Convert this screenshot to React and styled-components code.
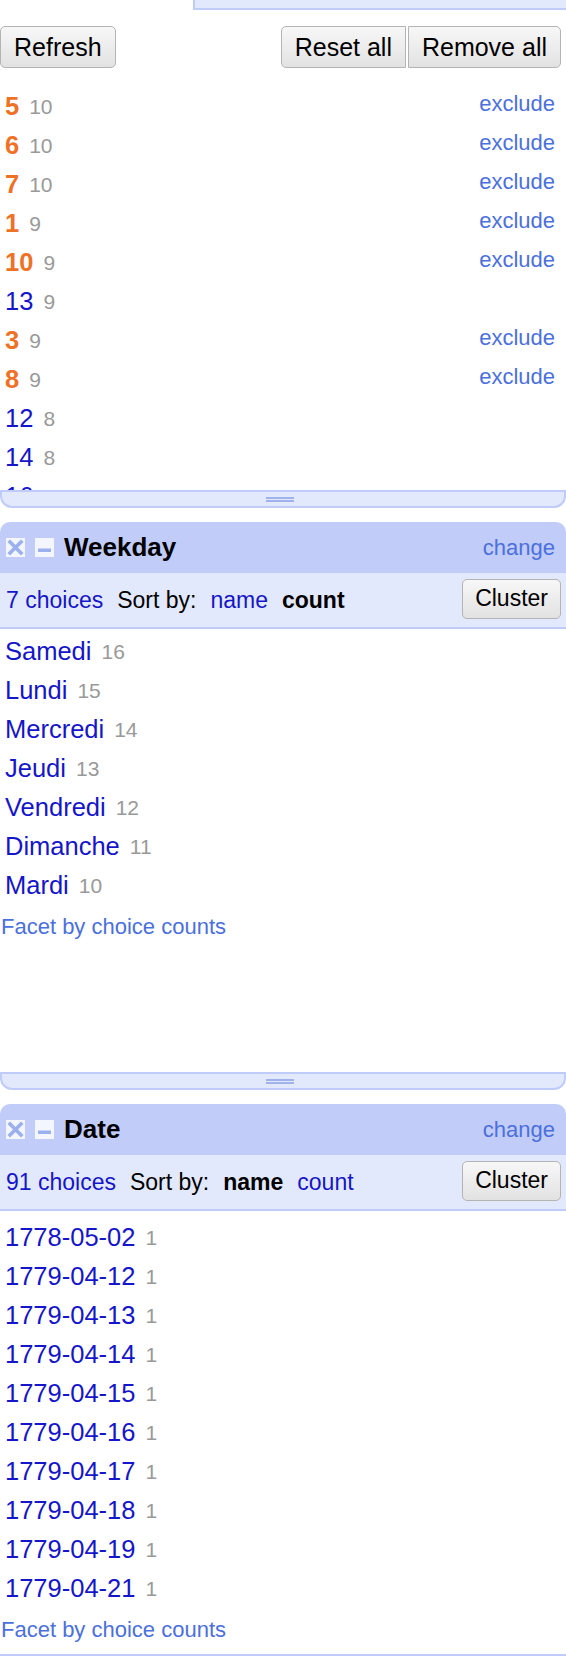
import React from 'react';
import styled, { createGlobalStyle } from 'styled-components';

const GlobalStyle = createGlobalStyle`
      body {
            margin: 0;
            background: #fff;
            font-family: "Liberation Sans", Arial, Helvetica, sans-serif;
      }
`;

const Page = styled.div`
      width: 566px;
      display: flex;
      flex-direction: column;
`;
const TopStub = styled.div`
      margin-left: 193px;
      height: 8px;
      background: #e3e9fc;
      border-left: 2px solid #c0ccf8;
      border-bottom: 2px solid #c0ccf8;
`;
const Toolbar = styled.div`
      display: flex;
      justify-content: space-between;
      margin-top: 16px;
      padding-right: 5px;
`;
const ButtonGroup = styled.div`
      display: flex;
      gap: 2px;
`;
const Button = styled.button`
      height: 42px;
      padding: 0 13px;
      font-family: inherit;
      font-size: 25px;
      color: #000;
      background: linear-gradient(#f7f7f7, #e2e2e2);
      border: 1.5px solid #b4b4b4;
      border-radius: ${(p) => p.$radius || '5px'};
      cursor: pointer;
`;
const ClusterButton = styled(Button)`
      height: 40px;
      margin-left: auto;
      padding: 0 12px;
      font-size: 23px;
      margin-top: -3px;
`;
const Body = styled.div`
      box-sizing: border-box;
      height: ${(p) => p.$height}px;
      padding-top: ${(p) => p.$top || 0}px;
      overflow: hidden;
`;
const Row = styled.div`
      display: flex;
      align-items: center;
      height: 39px;
      padding: 0 11px 0 5px;
`;
const ChoiceName = styled.a`
      font-size: 25.5px;
      text-decoration: none;
      color: ${(p) => (p.$selected ? '#ef7126' : '#1515c9')};
      font-weight: ${(p) => (p.$selected ? 'bold' : 'normal')};
`;
const Count = styled.span`
      margin-left: 10px;
      font-size: 21px;
      color: #999;
`;
const Exclude = styled.a`
      margin-left: auto;
      align-self: flex-start;
      line-height: 34px;
      font-size: 22px;
      color: #4b70dc;
`;
const ResizeBar = styled.div`
      box-sizing: border-box;
      height: 18px;
      display: flex;
      align-items: center;
      justify-content: center;
      background: #e3e9fc;
      border: 2px solid #bfcbf8;
      border-radius: 0 0 12px 12px;
`;
const Handle = styled.div`
      width: 28px;
      height: 1px;
      margin-right: 6px;
      border-top: 2px solid #9fb2ec;
      border-bottom: 2px solid #9fb2ec;
`;
const FacetBox = styled.div`
      margin-top: 14px;
`;
const Header = styled.div`
      display: flex;
      align-items: center;
      height: 51px;
      padding: 0 11px 0 6px;
      background: #c1ccf9;
      border-radius: 10px 10px 0 0;
`;
const IconButton = styled.span`
      display: flex;
      margin-right: ${(p) => p.$gap}px;
`;
const Title = styled.span`
      font-size: 26px;
      font-weight: bold;
      color: #000;
`;
const Change = styled.a`
      margin-left: auto;
      font-size: 22px;
      color: #4b70dc;
`;
const SubHeader = styled.div`
      display: flex;
      align-items: center;
      gap: 14px;
      height: 54px;
      padding: 0 5px 0 6px;
      background: #e3e9fc;
      border-bottom: 2px solid #bfcbf8;
      font-size: 23px;
`;
const SubLink = styled.a`
      color: #1515c9;
`;
const SubText = styled.span`
      color: #000;
      font-weight: ${(p) => (p.$bold ? 'bold' : 'normal')};
`;
const FacetLink = styled.a`
      display: block;
      margin-top: 9px;
      padding-left: 1px;
      font-size: 22px;
      line-height: 26px;
      color: #4b70dc;
`;

const firstChoices = [
      { name: '5', count: 10, selected: true },
      { name: '6', count: 10, selected: true },
      { name: '7', count: 10, selected: true },
      { name: '1', count: 9, selected: true },
      { name: '10', count: 9, selected: true },
      { name: '13', count: 9 },
      { name: '3', count: 9, selected: true },
      { name: '8', count: 9, selected: true },
      { name: '12', count: 8 },
      { name: '14', count: 8 },
      { name: '16', count: 8 },
];

const weekdays = [
      ['Samedi', 16],
      ['Lundi', 15],
      ['Mercredi', 14],
      ['Jeudi', 13],
      ['Vendredi', 12],
      ['Dimanche', 11],
      ['Mardi', 10],
];

const dates = [
      '1778-05-02',
      '1779-04-12',
      '1779-04-13',
      '1779-04-14',
      '1779-04-15',
      '1779-04-16',
      '1779-04-17',
      '1779-04-18',
      '1779-04-19',
      '1779-04-21',
];

const RemoveIcon = () => (
      <svg width="19" height="19" viewBox="0 0 19 19">
            <rect x="0" y="0" width="19" height="19" fill="#f3f6ff" />
            <path d="M4 4 L15 15 M15 4 L4 15" stroke="#9cb0ef" strokeWidth="3.6" strokeLinecap="square" />
      </svg>
);

const MinimizeIcon = () => (
      <svg width="19" height="19" viewBox="0 0 19 19">
            <rect x="0" y="0" width="19" height="19" fill="#f3f6ff" />
            <rect x="3" y="10.5" width="13" height="3.5" fill="#9cb0ef" />
      </svg>
);

const Facet = ({ title, total, sortBy, items, top }) => (
      <FacetBox>
            <Header>
                  <IconButton $gap={10}><RemoveIcon /></IconButton>
                  <IconButton $gap={10}><MinimizeIcon /></IconButton>
                  <Title>{title}</Title>
                  <Change>change</Change>
            </Header>
            <SubHeader>
                  <SubLink>{total} choices</SubLink>
                  <SubText>Sort by:</SubText>
                  {sortBy === 'name' ? <SubText $bold>name</SubText> : <SubLink>name</SubLink>}
                  {sortBy === 'count' ? <SubText $bold>count</SubText> : <SubLink>count</SubLink>}
                  <ClusterButton>Cluster</ClusterButton>
            </SubHeader>
            <Body $height={443} $top={top}>
                  {items.map(([name, count]) => (
                        <Row key={name}>
                              <ChoiceName>{name}</ChoiceName>
                              <Count>{count}</Count>
                        </Row>
                  ))}
                  <FacetLink>Facet by choice counts</FacetLink>
            </Body>
      </FacetBox>
);

const App = () => {
      return (
            <Page>
                  <GlobalStyle />
                  <TopStub />

                  <Toolbar>
                        <Button>Refresh</Button>
                        <ButtonGroup>
                              <Button $radius="5px 0 0 5px">Reset all</Button>
                              <Button $radius="0 5px 5px 0">Remove all</Button>
                        </ButtonGroup>
                  </Toolbar>

                  <Body $height={422} $top={19}>
                        {firstChoices.map((c) => (
                              <Row key={c.name}>
                                    <ChoiceName $selected={c.selected}>{c.name}</ChoiceName>
                                    <Count>{c.count}</Count>
                                    {c.selected && <Exclude>exclude</Exclude>}
                              </Row>
                        ))}
                  </Body>
                  <ResizeBar><Handle /></ResizeBar>

                  <Facet title="Weekday" total={7} sortBy="count" items={weekdays} top={3} />
                  <ResizeBar><Handle /></ResizeBar>

                  <Facet title="Date" total={91} sortBy="name" items={dates.map((d) => [d, 1])} top={7} />
                  <ResizeBar><Handle /></ResizeBar>
            </Page>
      );
};

export default App;
